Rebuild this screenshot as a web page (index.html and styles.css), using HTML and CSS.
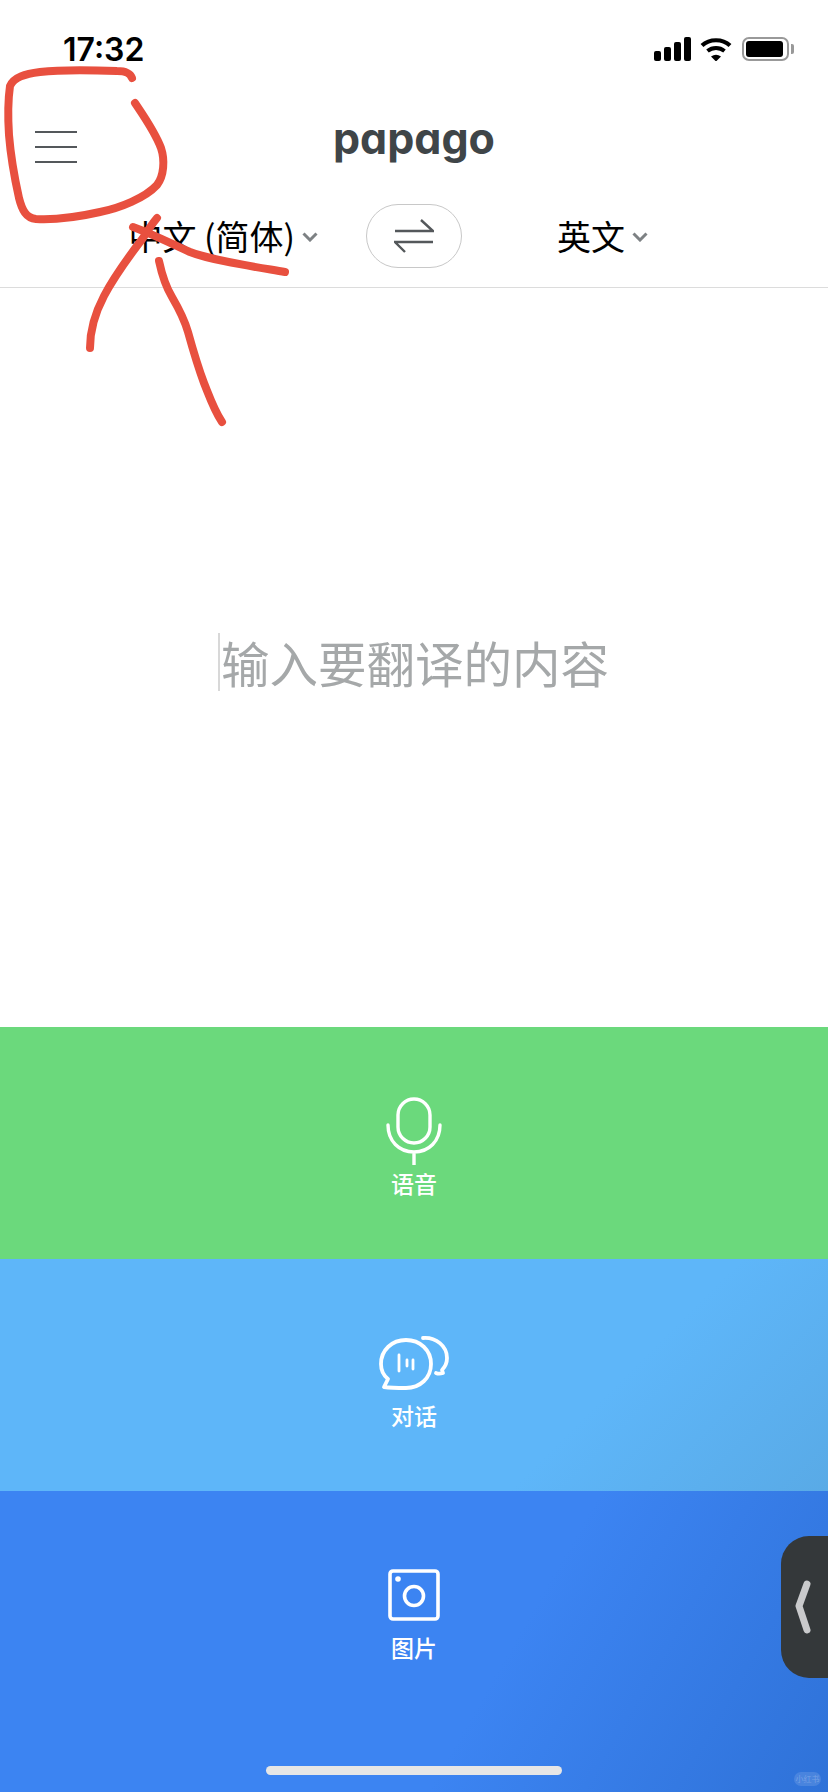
FILE: index.html
```html
<!DOCTYPE html>
<html lang="zh-CN">
<head>
    <meta charset="UTF-8">
    <meta name="viewport" content="width=device-width, initial-scale=1.0">
    <title>papago</title>
    <link rel="stylesheet" href="styles.css">
</head>
<body>
    <div class="screen">
        <div class="status-bar">
            <span class="time">17:32</span>
            <div class="status-icons">
                <div class="signal">
                    <span class="bar bar-1"></span>
                    <span class="bar bar-2"></span>
                    <span class="bar bar-3"></span>
                    <span class="bar bar-4"></span>
                </div>
                <svg class="wifi" width="32" height="24" viewBox="0 0 32 24">
                    <path d="M2 8.500C9.500 1.500 22.500 1.500 30 8.500" fill="none" stroke="#000" stroke-width="4.200"/>
                    <path d="M7.500 14C12.500 10 19.500 10 24.500 14" fill="none" stroke="#000" stroke-width="4"/>
                    <path d="M11 19.500Q16 16 21 19.500L16 24.500Z" fill="#000"/>
                </svg>
                <div class="battery">
                    <span class="battery-level"></span>
                </div>
                <span class="battery-nub"></span>
            </div>
        </div>

        <header class="app-header">
            <div class="menu-btn">
                <span></span>
                <span></span>
                <span></span>
            </div>
            <div class="logo">papago</div>
        </header>

        <div class="lang-row">
            <div class="lang lang-source">
                中文 (简体)
                <svg class="caret" width="16" height="10" viewBox="0 0 16 10"><path d="M1.500 1.500L8 8L14.500 1.500" fill="none" stroke="#7d8184" stroke-width="3"/></svg>
            </div>
            <button class="swap-btn">
                <svg width="40" height="34" viewBox="0 0 40 34">
                    <path d="M1 12H39L27 1" fill="none" stroke="#54585b" stroke-width="2.400"/>
                    <path d="M39 23H1L11 33" fill="none" stroke="#54585b" stroke-width="2.400"/>
                </svg>
            </button>
            <div class="lang lang-target">
                英文
                <svg class="caret" width="16" height="10" viewBox="0 0 16 10"><path d="M1.500 1.500L8 8L14.500 1.500" fill="none" stroke="#7d8184" stroke-width="3"/></svg>
            </div>
        </div>

        <main class="input-area">
            <div class="placeholder"><span class="cursor"></span>输入要翻译的内容</div>
        </main>

        <section class="band band-voice">
            <div class="band-icon">
                <svg width="56" height="68" viewBox="0 0 56 68">
                    <rect x="12" y="2" width="32" height="44" rx="16" fill="none" stroke="#fff" stroke-width="3.400"/>
                    <path d="M2 28C2 44 13 55 28 55C43 55 54 44 54 28M28 55V68" fill="none" stroke="#fff" stroke-width="3.400" stroke-linecap="round"/>
                </svg>
            </div>
            <span class="band-label">语音</span>
        </section>
        <section class="band band-talk">
            <div class="band-icon">
                <svg width="72" height="56" viewBox="0 0 72 56">
                    <path d="M28 5C14 5 3 15 3 29C3 35 5 40 10 44L6 52C13 53 21 53 28 53C42 53 53 43 53 29C53 15 42 5 28 5Z" fill="none" stroke="#fff" stroke-width="3.800" stroke-linejoin="round"/>
                    <path d="M45 3C58 2 69 11 69 23C69 28 67 32 64 35L65 38C62 39 60 39 58 38" fill="none" stroke="#fff" stroke-width="3.800" stroke-linecap="round" stroke-linejoin="round"/>
                    <path d="M21 20V36M29 25V31M35 25V34" fill="none" stroke="#fff" stroke-width="2.800" stroke-linecap="round"/>
                </svg>
            </div>
            <span class="band-label">对话</span>
        </section>
        <section class="band band-image">
            <div class="band-icon">
                <svg width="52" height="52" viewBox="0 0 52 52">
                    <rect x="2" y="2" width="48" height="48" rx="3" fill="none" stroke="#fff" stroke-width="3.600"/>
                    <circle cx="26" cy="27" r="9.500" fill="none" stroke="#fff" stroke-width="3.600"/>
                    <circle cx="10" cy="10" r="2.800" fill="#fff"/>
                </svg>
            </div>
            <span class="band-label">图片</span>
        </section>

        <!-- things lying over the page -->
        <div class="side-handle">
            <svg width="16" height="54" viewBox="0 0 16 54"><path d="M12 4L4 26L12 50" fill="none" stroke="#c9cacc" stroke-width="7" stroke-linecap="round" stroke-linejoin="round"/></svg>
        </div>
        <div class="home-bar"></div>
        <div class="watermark">小红书</div>

        <svg class="scribble" width="828" height="440" viewBox="0 0 828 440">
            <path d="M132 78C130 73 126 71 117 71C92 70 65 69 40 72C25 74 14 77 10 86C8 100 8 120 9 135C11 160 15 180 19 198C22 210 26 218 36 219C55 220 78 217 100 212C120 208 145 198 157 185C164 176 165 160 161 148C155 132 145 118 135 103" fill="none" stroke="#e8503f" stroke-width="8" stroke-linecap="round"/>
            <path d="M90 348C90 330 94 315 104 296C115 275 130 255 143 238C148 230 152 224 157 218" fill="none" stroke="#e8503f" stroke-width="8" stroke-linecap="round"/>
            <path d="M133 227C150 233 170 243 190 252C210 260 250 266 285 272" fill="none" stroke="#e8503f" stroke-width="8" stroke-linecap="round"/>
            <path d="M159 261C162 275 166 287 172 297C179 309 184 318 188 332C193 350 198 367 204 383C210 398 214 410 222 422" fill="none" stroke="#e8503f" stroke-width="8" stroke-linecap="round"/>
        </svg>
    </div>
</body>
</html>
```

FILE: styles.css
```css
html, body {
    margin: 0;
    padding: 0;
    background-color: white;
    overflow: hidden;
}
.screen {
    position: relative;
    width: 828px;
    height: 1792px;
    display: flex;
    flex-direction: column;
    overflow: hidden;
    font-family: "Noto Sans CJK SC", "Liberation Sans", sans-serif;
}
.status-bar {
    height: 88px;
    display: flex;
    justify-content: space-between;
    align-items: flex-start;
    padding: 32px 34px 0 63px;
    box-sizing: border-box;
}
.time {
    font-family: Inter, sans-serif;
    font-size: 32px;
    font-weight: 600;
    line-height: 36px;
    color: black;
}
.status-icons {
    display: flex;
    align-items: center;
    padding-top: 5px;
    height: 24px;
}
.signal {
    display: flex;
    align-items: flex-end;
    gap: 3px;
    height: 24px;
}
.bar {
    width: 7px;
    background-color: black;
    border-radius: 2px;
}
.bar-1 { height: 10px; }
.bar-2 { height: 14px; }
.bar-3 { height: 19px; }
.bar-4 { height: 24px; }
.wifi {
    margin-left: 9px;
}
.battery {
    margin-left: 10px;
    width: 47px;
    height: 24px;
    box-sizing: border-box;
    border: 2px solid #999;
    border-radius: 7px;
    padding: 2px;
}
.battery-level {
    display: block;
    width: 37px;
    height: 16px;
    background-color: black;
    border-radius: 3px;
}
.battery-nub {
    margin-left: 2px;
    width: 3px;
    height: 10px;
    background-color: #999;
    border-radius: 0 2px 2px 0;
}
.app-header {
    height: 102px;
    display: grid;
    grid-template-columns: 1fr auto 1fr;
    align-items: center;
}
.menu-btn {
    display: flex;
    flex-direction: column;
    gap: 13px;
    width: 42px;
    margin-left: 35px;
    margin-top: 16px;
}
.menu-btn span {
    height: 2px;
    background-color: #54585b;
}
.logo {
    font-family: Inter, sans-serif;
    font-feature-settings: "cv11";
    font-size: 43px;
    font-weight: 700;
    color: #3f4548;
    line-height: 1;
    margin-top: -2px;
}
.lang-row {
    height: 98px;
    display: grid;
    grid-template-columns: 1fr 96px 1fr;
    align-items: center;
    border-bottom: 1px solid #dcdcdc;
    box-sizing: border-box;
    padding-bottom: 6px;
}
.lang {
    display: flex;
    align-items: center;
    gap: 7px;
    font-size: 34px;
    line-height: 40px;
    color: black;
    white-space: nowrap;
}
.lang-source {
    justify-content: flex-end;
    padding-right: 48px;
}
.lang-target {
    padding-left: 95px;
}
.caret {
    margin-top: 2px;
}
.swap-btn {
    width: 96px;
    height: 64px;
    padding: 0;
    display: flex;
    align-items: center;
    justify-content: center;
    background-color: white;
    border: 1px solid #c8c8c8;
    border-radius: 32px;
}
.input-area {
    flex: 1;
    display: flex;
    align-items: center;
    justify-content: center;
}
.placeholder {
    display: flex;
    align-items: center;
    font-size: 48.500px;
    line-height: 58px;
    color: #a5a8a9;
    margin-top: 9px;
    margin-right: 1px;
}
.cursor {
    width: 2px;
    height: 58px;
    background-color: #d8d8d8;
    margin-right: 1px;
}
.band {
    height: 232px;
    flex: none;
    display: flex;
    flex-direction: column;
    align-items: center;
    padding-top: 70px;
    box-sizing: border-box;
}
.band-icon {
    height: 68px;
    display: flex;
    align-items: center;
    justify-content: center;
}
.band-label {
    font-size: 23px;
    font-weight: 500;
    line-height: 30px;
    color: white;
    margin-top: 3px;
}
.band-voice {
    background-color: #6bd97c;
}
.band-talk {
    background: linear-gradient(135deg, #5eb6f9 70%, #59aae6 100%);
}
.band-image {
    height: 301px;
    background: linear-gradient(120deg, #3c84f2 60%, #2f72d8 100%);
}
.side-handle {
    position: absolute;
    right: 0;
    top: 1536px;
    width: 47px;
    height: 142px;
    background-color: #34383a;
    border-radius: 28px 0 0 28px;
    display: flex;
    align-items: center;
    padding-left: 14px;
    box-sizing: border-box;
}
.home-bar {
    position: absolute;
    left: 266px;
    top: 1766px;
    width: 296px;
    height: 9px;
    border-radius: 5px;
    background-color: #e6e6e6;
}
.watermark {
    position: absolute;
    left: 794px;
    top: 1772px;
    width: 27px;
    height: 14px;
    border-radius: 7px;
    background-color: rgba(255, 255, 255, 0.12);
    color: rgba(255, 255, 255, 0.25);
    font-size: 8px;
    line-height: 14px;
    text-align: center;
}
.scribble {
    position: absolute;
    left: 0;
    top: 0;
    pointer-events: none;
}
```
